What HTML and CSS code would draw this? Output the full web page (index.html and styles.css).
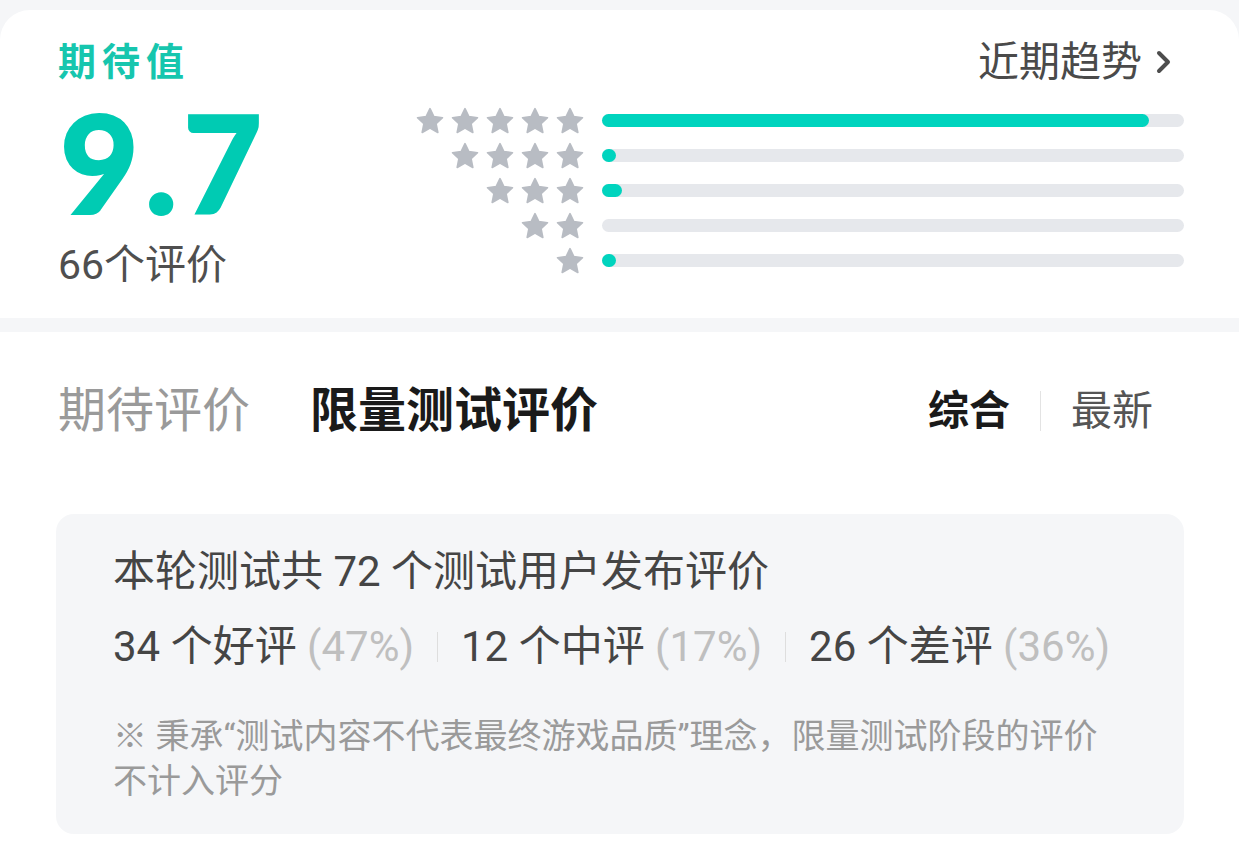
FILE: index.html
```html
<!DOCTYPE html>
<html>
<head>
	<meta charset="UTF-8">
	<title>期待值</title>
	<link rel="stylesheet" href="styles.css">
</head>
<body>

	<div class="page">

		<div class="summary">
			<div class="score_wrapper">
				<div class="score_title">期待值</div>
				<div class="score_value">9.7</div>
				<div class="score_count">66个评价</div>
			</div>

			<div class="dist_wrapper">
				<div class="trend">
					<span>近期趋势</span>
					<svg class="chevron" viewBox="0 0 20 28" width="20" height="28"><polyline points="5,5 14,14 5,23" fill="none" stroke="#4d4d4d" stroke-width="4" stroke-linecap="round" stroke-linejoin="round"/></svg>
				</div>

				<div class="dist_row">
					<div class="stars">
						<svg class="star" viewBox="0 0 24 24"><path d="M12 1.4l3.3 6.9 7.4.9-5.5 5.1 1.5 7.5L12 18.1l-6.7 3.7 1.5-7.5-5.5-5.1 7.4-.9z"/></svg>
						<svg class="star" viewBox="0 0 24 24"><path d="M12 1.4l3.3 6.9 7.4.9-5.5 5.1 1.5 7.5L12 18.1l-6.7 3.7 1.5-7.5-5.5-5.1 7.4-.9z"/></svg>
						<svg class="star" viewBox="0 0 24 24"><path d="M12 1.4l3.3 6.9 7.4.9-5.5 5.1 1.5 7.5L12 18.1l-6.7 3.7 1.5-7.5-5.5-5.1 7.4-.9z"/></svg>
						<svg class="star" viewBox="0 0 24 24"><path d="M12 1.4l3.3 6.9 7.4.9-5.5 5.1 1.5 7.5L12 18.1l-6.7 3.7 1.5-7.5-5.5-5.1 7.4-.9z"/></svg>
						<svg class="star" viewBox="0 0 24 24"><path d="M12 1.4l3.3 6.9 7.4.9-5.5 5.1 1.5 7.5L12 18.1l-6.7 3.7 1.5-7.5-5.5-5.1 7.4-.9z"/></svg>
					</div>
					<div class="track"><div class="fill" style="width: 94%;"></div></div>
				</div>

				<div class="dist_row">
					<div class="stars">
						<svg class="star" viewBox="0 0 24 24"><path d="M12 1.4l3.3 6.9 7.4.9-5.5 5.1 1.5 7.5L12 18.1l-6.7 3.7 1.5-7.5-5.5-5.1 7.4-.9z"/></svg>
						<svg class="star" viewBox="0 0 24 24"><path d="M12 1.4l3.3 6.9 7.4.9-5.5 5.1 1.5 7.5L12 18.1l-6.7 3.7 1.5-7.5-5.5-5.1 7.4-.9z"/></svg>
						<svg class="star" viewBox="0 0 24 24"><path d="M12 1.4l3.3 6.9 7.4.9-5.5 5.1 1.5 7.5L12 18.1l-6.7 3.7 1.5-7.5-5.5-5.1 7.4-.9z"/></svg>
						<svg class="star" viewBox="0 0 24 24"><path d="M12 1.4l3.3 6.9 7.4.9-5.5 5.1 1.5 7.5L12 18.1l-6.7 3.7 1.5-7.5-5.5-5.1 7.4-.9z"/></svg>
					</div>
					<div class="track"><div class="fill" style="width: 2.4%;"></div></div>
				</div>

				<div class="dist_row">
					<div class="stars">
						<svg class="star" viewBox="0 0 24 24"><path d="M12 1.4l3.3 6.9 7.4.9-5.5 5.1 1.5 7.5L12 18.1l-6.7 3.7 1.5-7.5-5.5-5.1 7.4-.9z"/></svg>
						<svg class="star" viewBox="0 0 24 24"><path d="M12 1.4l3.3 6.9 7.4.9-5.5 5.1 1.5 7.5L12 18.1l-6.7 3.7 1.5-7.5-5.5-5.1 7.4-.9z"/></svg>
						<svg class="star" viewBox="0 0 24 24"><path d="M12 1.4l3.3 6.9 7.4.9-5.5 5.1 1.5 7.5L12 18.1l-6.7 3.7 1.5-7.5-5.5-5.1 7.4-.9z"/></svg>
					</div>
					<div class="track"><div class="fill" style="width: 3.4%;"></div></div>
				</div>

				<div class="dist_row">
					<div class="stars">
						<svg class="star" viewBox="0 0 24 24"><path d="M12 1.4l3.3 6.9 7.4.9-5.5 5.1 1.5 7.5L12 18.1l-6.7 3.7 1.5-7.5-5.5-5.1 7.4-.9z"/></svg>
						<svg class="star" viewBox="0 0 24 24"><path d="M12 1.4l3.3 6.9 7.4.9-5.5 5.1 1.5 7.5L12 18.1l-6.7 3.7 1.5-7.5-5.5-5.1 7.4-.9z"/></svg>
					</div>
					<div class="track"><div class="fill" style="width: 0;"></div></div>
				</div>

				<div class="dist_row">
					<div class="stars">
						<svg class="star" viewBox="0 0 24 24"><path d="M12 1.4l3.3 6.9 7.4.9-5.5 5.1 1.5 7.5L12 18.1l-6.7 3.7 1.5-7.5-5.5-5.1 7.4-.9z"/></svg>
					</div>
					<div class="track"><div class="fill" style="width: 2.4%;"></div></div>
				</div>
			</div>
		</div>

		<div class="reviews">
			<div class="tab_bar">
				<div class="tabs">
					<span class="tab">期待评价</span>
					<span class="tab active">限量测试评价</span>
				</div>
				<div class="sort">
					<span class="sort_item active">综合</span>
					<span class="sort_sep"></span>
					<span class="sort_item">最新</span>
				</div>
			</div>

			<div class="test_box">
				<div class="test_total">本轮测试共 72 个测试用户发布评价</div>
				<div class="test_split">
					<span>34 个好评 <em>(47%)</em></span>
					<span class="split_sep"></span>
					<span>12 个中评 <em>(17%)</em></span>
					<span class="split_sep"></span>
					<span>26 个差评 <em>(36%)</em></span>
				</div>
				<div class="test_note">※ 秉承“测试内容不代表最终游戏品质”理念，限量测试阶段的评价不计入评分</div>
			</div>
		</div>

	</div>

</body>
</html>
```

FILE: styles.css
```css
body{
	margin: 0;
	background: #f5f6f8;
	font-family: Roboto, "Noto Sans CJK SC", sans-serif;
}

.page{
	display: flex;
	flex-direction: column;
	min-height: 100vh;
	padding-top: 10px;
	box-sizing: border-box;
}

/* 상단 점수 카드 */
.summary{
	display: flex;
	height: 308px;
	box-sizing: border-box;
	padding: 32px 55px 0 58px;
	background: #fff;
	border-radius: 30px 30px 0 0;
}

.score_wrapper{
	width: 358px;
}

.score_title{
	font-size: 38px;
	line-height: 40px;
	font-weight: bold;
	letter-spacing: 6px;
	color: #16c6ae;
}

.score_value{
	margin-top: 13px;
	padding-left: 2px;
	font-family: Lato, sans-serif;
	font-size: 136px;
	line-height: 133px;
	font-weight: 900;
	letter-spacing: 6px;
	color: #00cbb3;
	-webkit-text-stroke: 2px #00cbb3;
}

.score_count{
	margin-top: 15px;
	font-size: 41px;
	line-height: 44px;
	color: #4f4f4f;
}

.dist_wrapper{
	flex: 1;
}

.trend{
	display: flex;
	justify-content: flex-end;
	align-items: center;
	padding-right: 10px;
	font-size: 41px;
	line-height: 40px;
	color: #4a4a4a;
}

.chevron{
	margin-left: 12px;
}

.trend + .dist_row{
	margin-top: 21px;
}

.dist_row{
	display: flex;
	align-items: center;
	height: 35px;
}

.stars{
	display: flex;
	justify-content: flex-end;
	gap: 7px;
	width: 168px;
}

.star{
	width: 28px;
	height: 28px;
	fill: #b8bcc3;
	stroke: #b8bcc3;
	stroke-width: 1.4;
	stroke-linejoin: round;
}

.track{
	flex: 1;
	height: 13px;
	margin-left: 18px;
	border-radius: 7px;
	background: #e6e8ec;
}

.fill{
	height: 13px;
	border-radius: 7px;
	background: #00d4be;
}

/* 하단 리뷰 영역 */
.reviews{
	flex: 1;
	margin-top: 14px;
	padding: 51px 55px 13px 56px;
	background: #fff;
}

.tab_bar{
	display: flex;
	justify-content: space-between;
	align-items: center;
	height: 56px;
	padding: 0 31px 0 2px;
}

.tabs{
	display: flex;
	gap: 60px;
}

.tab{
	font-size: 48px;
	line-height: 56px;
	color: #9a9a9a;
}

.tab.active{
	font-weight: bold;
	color: #1a1a1a;
}

.sort{
	display: flex;
	align-items: center;
}

.sort_item{
	font-size: 41px;
	line-height: 56px;
	color: #555;
}

.sort_item.active{
	font-weight: bold;
	color: #1a1a1a;
}

.sort_sep{
	width: 1px;
	height: 40px;
	margin: 0 30px;
	background: #e3e3e3;
}

.test_box{
	margin-top: 75px;
	padding: 30px 57px 30px 57px;
	background: #f5f6f8;
	border-radius: 18px;
}

.test_total{
	font-size: 42px;
	line-height: 56px;
	color: #454545;
}

.test_split{
	display: flex;
	align-items: center;
	margin-top: 19px;
	font-size: 42px;
	line-height: 56px;
	color: #454545;
}

.test_split em{
	font-style: normal;
	color: #bfbfbf;
}

.split_sep{
	width: 1px;
	height: 30px;
	margin: 0 23px;
	background: #dedede;
}

.test_note{
	max-width: 1000px;
	margin-top: 39px;
	font-size: 34px;
	line-height: 45px;
	color: #9a9a9a;
}
```
